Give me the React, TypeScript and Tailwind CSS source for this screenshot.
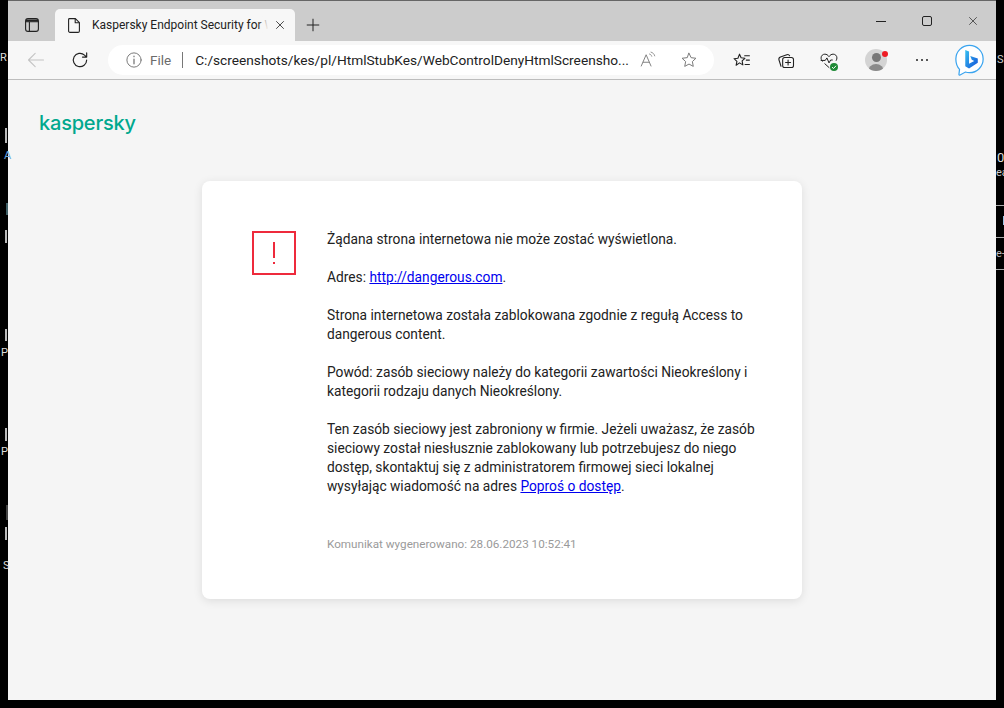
import { Plus, X } from "lucide-react";

const ui = "font-['Roboto','Noto_Sans',sans-serif]";

function Icon({ children, className = "" }: { children: React.ReactNode; className?: string }) {
  return (
    <svg viewBox="0 0 24 24" fill="none" stroke="currentColor" strokeWidth="1.5" strokeLinecap="round" strokeLinejoin="round" className={className}>
      {children}
    </svg>
  );
}

function TabStrip() {
  return (
    <div className="flex h-[40px] shrink-0 bg-[#cccccc]">
      <div className="flex w-[47px] items-end justify-center pb-[9px]">
        <svg viewBox="0 0 14 14" fill="none" stroke="#222" strokeWidth="1.1" className="size-[14px]">
          <rect x="0.6" y="0.6" width="12.8" height="12.8" rx="2.4" />
          <path d="M0.6 3.8H13.4M4.4 3.8V13.4" />
          <path d="M1 1.5H13V3.5H1Z" fill="#222" stroke="none" />
        </svg>
      </div>
      <div className="mt-[8px] flex h-[32px] w-[240px] items-center rounded-t-[5px] bg-[#f7f7f7] pl-[13px]">
        <svg viewBox="0 0 12 15" fill="none" stroke="#222" strokeWidth="1.1" strokeLinejoin="round" className="h-[15px] w-[12px]">
          <path d="M1.5 0.6H7.4L11.4 4.6V12.9C11.4 13.7 10.8 14.4 10 14.4H2C1.2 14.4 0.6 13.7 0.6 12.9V1.5C0.6 1 1 0.6 1.5 0.6Z" />
          <path d="M7.2 0.8V4.8H11.2" />
        </svg>
        <div className="relative ml-[12px] w-[176px] overflow-hidden whitespace-nowrap text-[12px] text-[#222]">
          Kaspersky Endpoint Security for Windows
          <div className="absolute inset-y-0 right-0 w-[10px] bg-gradient-to-r from-transparent to-[#f7f7f7]" />
        </div>
        <X className="ml-[5px] size-[14px] text-[#333]" strokeWidth={1.5} />
      </div>
      <div className="flex w-[36px] items-center justify-center pt-[8px]">
        <Plus className="size-[20px] text-[#222]" strokeWidth={1.2} />
      </div>
      <div className="ml-auto flex w-[138px] items-center text-[#222]">
        <div className="ml-[18px] h-px w-[10px] bg-[#222]" />
        <div className="ml-[36px] size-[10px] rounded-[2px] border border-[#222]" />
        <X className="ml-[34px] size-[14px]" strokeWidth={1.2} />
      </div>
    </div>
  );
}

function Toolbar() {
  return (
    <div className="flex h-[39px] shrink-0 items-center border-b border-[#bdbdbd] bg-[#f7f7f7]">
      <Icon className="ml-[18px] size-[20px] text-[#c4c4c4]">
        <path d="M21 12H3M11 4l-8 8 8 8" strokeWidth="1.3" />
      </Icon>
      <Icon className="ml-[24px] size-[20px] text-[#222]">
        <path d="M20 12a8 8 0 1 1-2.6-5.9L20 8.5M20 3.5v5h-5" strokeWidth="1.4" />
      </Icon>
      <div className="ml-[18px] flex h-[30px] w-[606px] items-center rounded-full bg-white pl-[17px]">
        <Icon className="size-[18px] text-[#777]">
          <circle cx="12" cy="12" r="9.5" strokeWidth="1.3" />
          <path d="M12 11v6M12 7v.5" strokeWidth="1.7" />
        </Icon>
        <span className="ml-[7px] text-[13.5px] text-[#6b6b6b]">File</span>
        <div className="ml-[11px] h-[16px] w-px bg-[#777]" />
        <span className="ml-[12px] w-[434px] whitespace-nowrap text-[13.7px] text-[#222]">
          C:/screenshots/kes/pl/HtmlStubKes/WebControlDenyHtmlScreensho...
        </span>
        <Icon className="ml-[10px] size-[18px] text-[#808080]">
          <path d="M3 20 9.5 5 16 20M5.5 15h8" strokeWidth="1.3" />
          <path d="M14 4c1.5.4 2.600 1.500 3 3M16 1.500c2.500.6 4.400 2.500 5 5" strokeWidth="1.1" />
        </Icon>
        <Icon className="ml-[23px] size-[18px] text-[#777]">
          <path d="m12 3 2.800 5.900 6.400.8-4.700 4.400 1.200 6.400-5.700-3.100-5.700 3.100 1.200-6.400-4.700-4.400 6.400-.8Z" strokeWidth="1.3" />
        </Icon>
      </div>
      <Icon className="ml-[18px] size-[19px] text-[#222]">
        <path d="m9.500 4 2 4.600 4.800.6-3.500 3.300.9 5-4.200-2.500L5.200 18l1-5-3.600-3.300 4.900-.6Z" strokeWidth="1.4" />
        <path d="M16 6h6M18 11.500h4M16.500 17H22" strokeWidth="1.4" />
      </Icon>
      <Icon className="ml-[25px] size-[20px] text-[#222]">
        <path d="M6 19.500 3.600 12c-.5-1.600.1-3 1.700-3.600L13 5.600c1.400-.5 2.700 0 3.300 1.300" strokeWidth="1.300" />
        <rect x="8" y="9" width="13" height="12" rx="2.500" strokeWidth="1.300" />
        <path d="M14.500 12v6M11.500 15h6" strokeWidth="1.300" />
      </Icon>
      <div className="relative ml-[23px] size-[20px]">
        <Icon className="size-[20px] text-[#222]">
          <path d="M4 13.500C2.800 12 2.500 10.800 2.500 9.500 2.500 6.800 4.600 5 7 5c2 0 3.700 1 5 3 1.300-2 3-3 5-3 2.400 0 4.500 1.800 4.500 4.500 0 1-.2 1.900-.8 3" strokeWidth="1.200" />
          <path d="M2.500 12.500h5l2-3 2.500 6 2-3.500h2" strokeWidth="1.200" />
          <path d="M7 16.500 12 21" strokeWidth="1.200" />
        </Icon>
        <svg viewBox="0 0 8 8" className="absolute bottom-[-1px] right-[1px] size-[8px]">
          <circle cx="4" cy="4" r="4" fill="#1f8a36" />
          <path d="M2 4.100 3.500 5.500 6 2.800" fill="none" stroke="#fff" strokeWidth="1" />
        </svg>
      </div>
      <div className="relative ml-[26px] size-[22px] overflow-hidden rounded-full bg-[#d4d4d4]">
        <div className="mx-auto mt-[4px] size-[9px] rounded-full bg-[#777]" />
        <div className="mx-auto mt-[2px] h-[10px] w-[16px] rounded-t-full bg-[#8a8a8a]" />
      </div>
      <div className="relative">
        <div className="absolute bottom-[3px] left-[-5px] size-[6px] rounded-full bg-[#ee1c25]" />
      </div>
      <div className="ml-[29px] flex gap-[3px]">
        <div className="size-[2px] rounded-full bg-[#222]" />
        <div className="size-[2px] rounded-full bg-[#222]" />
        <div className="size-[2px] rounded-full bg-[#222]" />
      </div>
      <svg viewBox="0 0 32 34" className="ml-[26px] h-[32px] w-[31px]">
        <defs>
          <linearGradient id="bingB" x1="0" y1="0" x2="1" y2="1">
            <stop offset="0" stopColor="#37c0f0" />
            <stop offset="1" stopColor="#1352d8" />
          </linearGradient>
        </defs>
        <path d="M16 1.500C24 1.500 30.500 8 30.500 16S24 30.500 16 30.500c-1.500 0-3-.2-4.400-.7L6 33c-.7.3-1.300-.2-1.200-.9l.6-5.100C2.900 24.300 1.500 20.400 1.500 16 1.500 8 8 1.500 16 1.500Z" fill="#fff" stroke="#3aa4ef" strokeWidth="1.300" />
        <path d="M11.500 6.500 15.500 8V21l5.500-3-2.600-1.300-1.600-4 8 2.800v4.300L15.500 26l-4-2.400Z" fill="url(#bingB)" />
      </svg>
    </div>
  );
}

function Card() {
  return (
    <div className="mx-auto mt-[43px] flex h-[418px] w-[600px] rounded-[8px] bg-white pl-[50px] pt-[50px] text-[13.76px] leading-[19px] text-[#222] shadow-[0_2px_10px_rgba(0,0,0,0.1)]">
      <div className="flex size-[44px] shrink-0 items-center justify-center border-2 border-[#ee2a3c]">
        <div className="flex flex-col items-center gap-[4px]">
          <div className="h-[16px] w-[2px] bg-[#ee2a3c]" />
          <div className="h-[2px] w-[2px] bg-[#ee2a3c]" />
        </div>
      </div>
      <div className="ml-[31px] -mt-px w-[430px]">
        <p>Żądana strona internetowa nie może zostać wyświetlona.</p>
        <p className="mt-[19px]">
          Adres: <a href="#" className="text-[#0000ee] underline">http://dangerous.com</a>.
        </p>
        <p className="mt-[19px]">Strona internetowa została zablokowana zgodnie z regułą Access to dangerous content.</p>
        <p className="mt-[19px]">Powód: zasób sieciowy należy do kategorii zawartości Nieokreślony i kategorii rodzaju danych Nieokreślony.</p>
        <p className="mt-[19px]">
          Ten zasób sieciowy jest zabroniony w firmie. Jeżeli uważasz, że zasób sieciowy został niesłusznie zablokowany lub potrzebujesz do niego dostęp, skontaktuj się z administratorem firmowej sieci lokalnej wysyłając wiadomość na adres <a href="#" className="text-[#0000ee] underline">Poproś o dostęp</a>.
        </p>
        <p className="mt-[39px] text-[11.7px] text-[#9a9a9a]">Komunikat wygenerowano: 28.06.2023 10:52:41</p>
      </div>
    </div>
  );
}

export default function App() {
  return (
    <div className={`relative h-[708px] w-[1004px] overflow-hidden bg-black ${ui}`}>
      {/* bits of the desktop showing behind the window */}
      <div className="absolute left-0 top-[50px] text-[11px] text-[#ddd]">R</div>
      <div className="absolute left-[5px] top-[128px] h-[15px] w-[2px] bg-[#bbb]" />
      <div className="absolute left-[4px] top-[148px] text-[11px] text-[#6aa9e0]">A</div>
      <div className="absolute left-[6px] top-[203px] h-[12px] w-[2px] bg-[#3f5f66]" />
      <div className="absolute left-[5px] top-[230px] h-[13px] w-[2px] bg-[#bbb]" />
      <div className="absolute left-[5px] top-[329px] h-[12px] w-[2px] bg-[#bbb]" />
      <div className="absolute left-[1px] top-[345px] text-[11px] text-[#ddd]">P</div>
      <div className="absolute left-[5px] top-[428px] h-[13px] w-[2px] bg-[#bbb]" />
      <div className="absolute left-[1px] top-[444px] text-[11px] text-[#ddd]">P</div>
      <div className="absolute left-[6px] top-[505px] h-[15px] w-[2px] bg-[#444]" />
      <div className="absolute left-[5px] top-[527px] h-[13px] w-[2px] bg-[#bbb]" />
      <div className="absolute left-[3px] top-[558px] text-[11px] text-[#ddd]">S</div>
      <div className="absolute left-[997px] top-[52px] text-[11px] text-[#ccc]">SH</div>
      <div className="absolute left-[997px] top-[148px] text-[13px] text-[#ddd]">0</div>
      <div className="absolute left-[996px] top-[165px] text-[11px] text-[#ccc]">ea</div>
      <div className="absolute left-[996px] top-[205px] h-px w-[8px] bg-[#aaa]" />
      <div className="absolute left-[1003px] top-[216px] h-[9px] w-px bg-[#9cc4e4]" />
      <div className="absolute left-[996px] top-[237px] h-px w-[8px] bg-[#aaa]" />
      <div className="absolute left-[996px] top-[246px] text-[11px] text-[#bbb]">e-</div>
      <div className="absolute left-[996px] top-[269px] h-px w-[8px] bg-[#aaa]" />

      <div className="ml-[8px] flex h-[700px] w-[988px] flex-col border-t border-[#666]">
        <TabStrip />
        <Toolbar />
        <div className="flex-1 bg-[#f5f5f5]">
          <div className="ml-[31px] mt-[29px] h-[29px] text-[20px] font-medium leading-[29px] tracking-[-0.2px] text-[#00a88e] font-['Inter',sans-serif]">kaspersky</div>
          <Card />
        </div>
      </div>
    </div>
  );
}
